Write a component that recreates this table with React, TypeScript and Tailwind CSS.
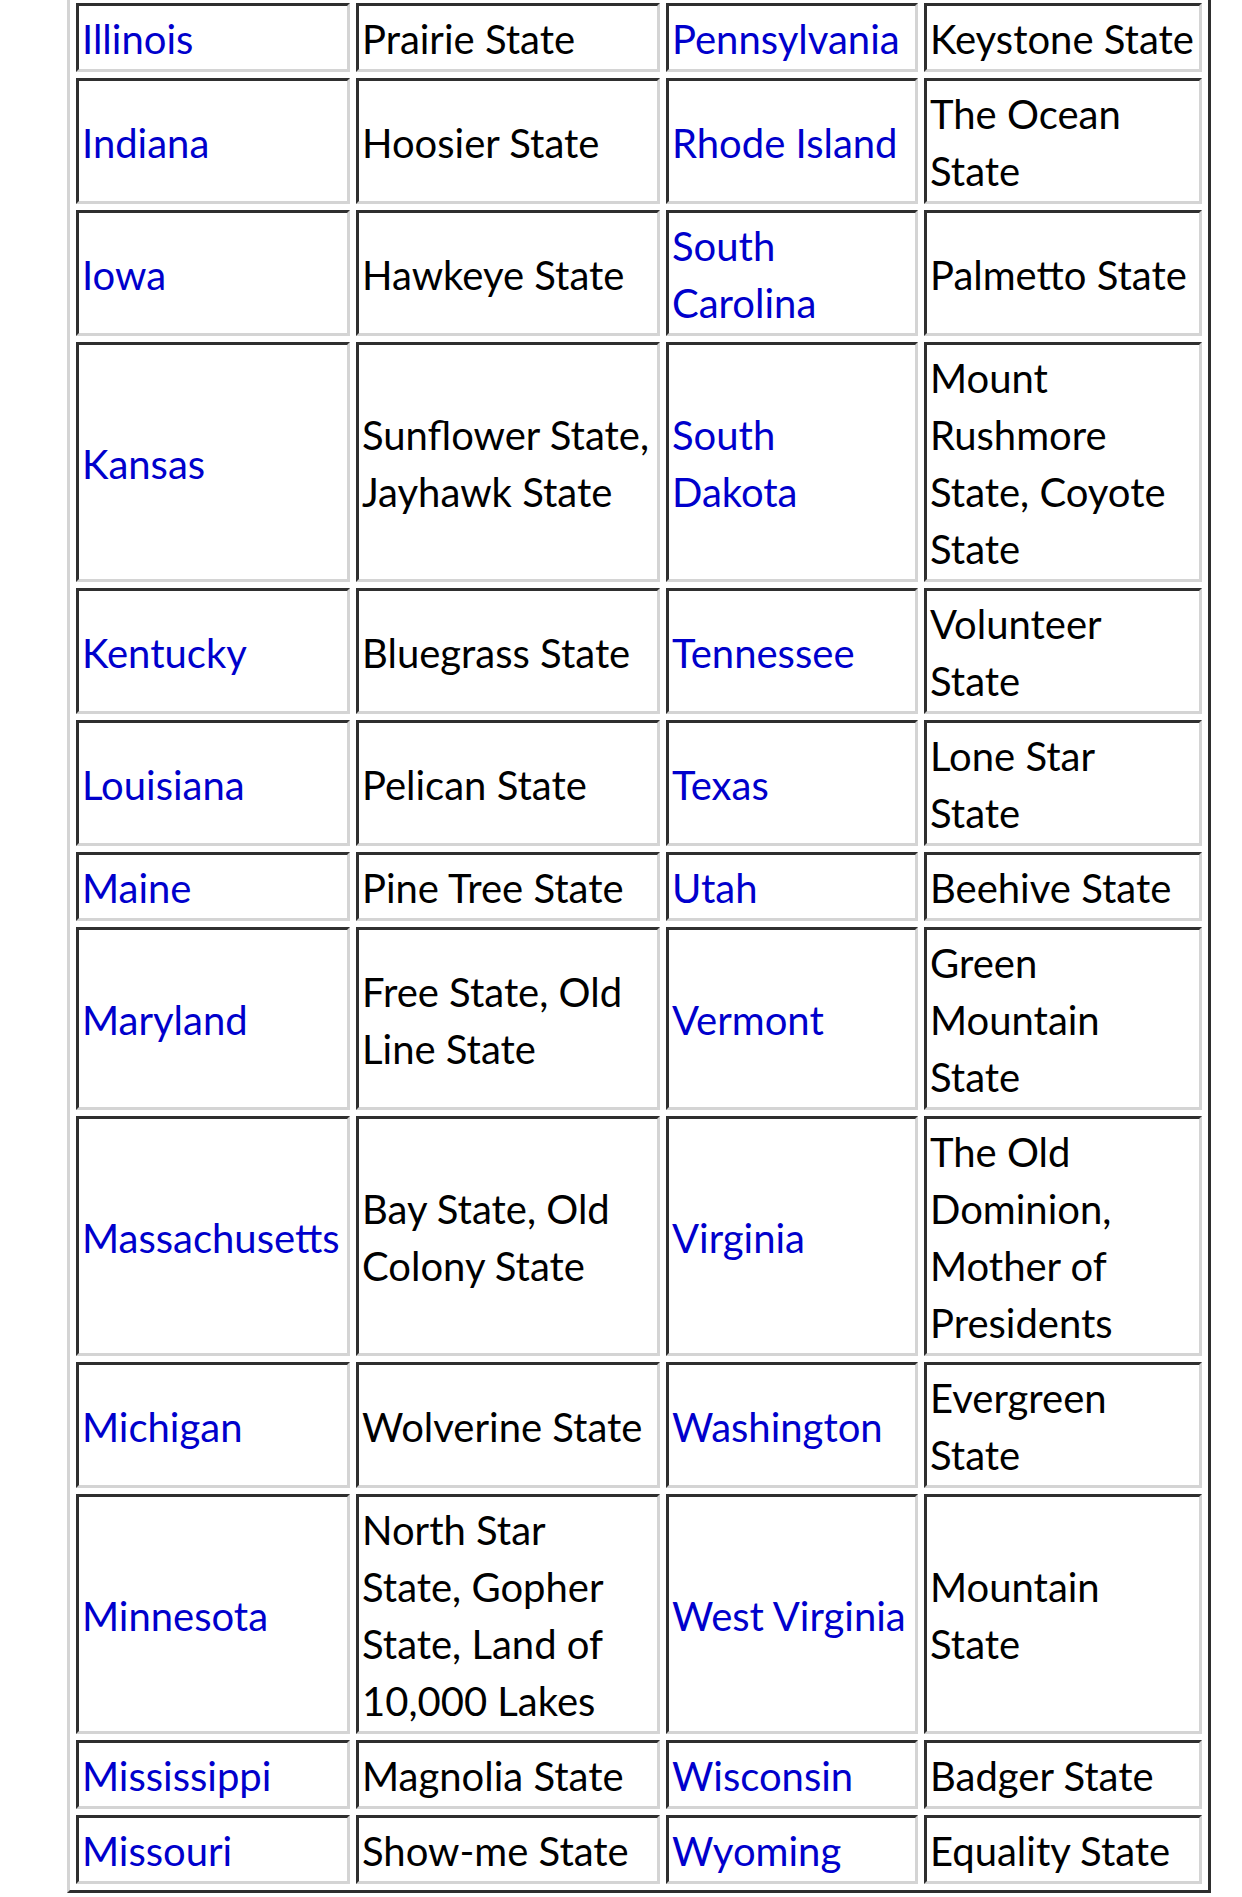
const rows: [string, string[], string[], string[]][] = [
  ["Illinois", ["Prairie State"], ["Pennsylvania"], ["Keystone State"]],
  ["Indiana", ["Hoosier State"], ["Rhode Island"], ["The Ocean", "State"]],
  ["Iowa", ["Hawkeye State"], ["South", "Carolina"], ["Palmetto State"]],
  ["Kansas", ["Sunflower State,", "Jayhawk State"], ["South", "Dakota"], ["Mount", "Rushmore", "State, Coyote", "State"]],
  ["Kentucky", ["Bluegrass State"], ["Tennessee"], ["Volunteer", "State"]],
  ["Louisiana", ["Pelican State"], ["Texas"], ["Lone Star", "State"]],
  ["Maine", ["Pine Tree State"], ["Utah"], ["Beehive State"]],
  ["Maryland", ["Free State, Old", "Line State"], ["Vermont"], ["Green", "Mountain", "State"]],
  ["Massachusetts", ["Bay State, Old", "Colony State"], ["Virginia"], ["The Old", "Dominion,", "Mother of", "Presidents"]],
  ["Michigan", ["Wolverine State"], ["Washington"], ["Evergreen", "State"]],
  ["Minnesota", ["North Star", "State, Gopher", "State, Land of", "10,000 Lakes"], ["West Virginia"], ["Mountain", "State"]],
  ["Mississippi", ["Magnolia State"], ["Wisconsin"], ["Badger State"]],
  ["Missouri", ["Show-me State"], ["Wyoming"], ["Equality State"]],
];

const cell =
  "border-[3px] border-t-[#2f2f2f] border-l-[#2f2f2f] border-r-[#d4d4d4] border-b-[#d4d4d4] px-[3px] pt-[5px] pb-[1px] align-middle text-left";

function Lines({ lines }: { lines: string[] }) {
  return (
    <>
      {lines.map((l, i) => (
        <span key={i} className="block whitespace-nowrap">
          {l}
        </span>
      ))}
    </>
  );
}

export default function App() {
  return (
    <div className="min-h-screen bg-white pl-[67px] overflow-hidden font-['Lato',sans-serif] text-[40px] leading-[57px] text-black">
      <table className="mt-[-6px] table-fixed border-separate border-spacing-[6px] border-[3px] border-t-[#d4d4d4] border-l-[#d4d4d4] border-r-[#2f2f2f] border-b-[#2f2f2f]">
        <colgroup>
          <col className="w-[274px]" />
          <col className="w-[304px]" />
          <col className="w-[252px]" />
          <col className="w-[278px]" />
        </colgroup>
        <tbody>
          {rows.map(([state, nick, state2, nick2]) => (
            <tr key={state}>
              <td className={cell}>
                <a className="text-[#0000cc] whitespace-nowrap">{state}</a>
              </td>
              <td className={cell}>
                <Lines lines={nick} />
              </td>
              <td className={`${cell} text-[#0000cc]`}>
                <Lines lines={state2} />
              </td>
              <td className={cell}>
                <Lines lines={nick2} />
              </td>
            </tr>
          ))}
        </tbody>
      </table>
    </div>
  );
}
